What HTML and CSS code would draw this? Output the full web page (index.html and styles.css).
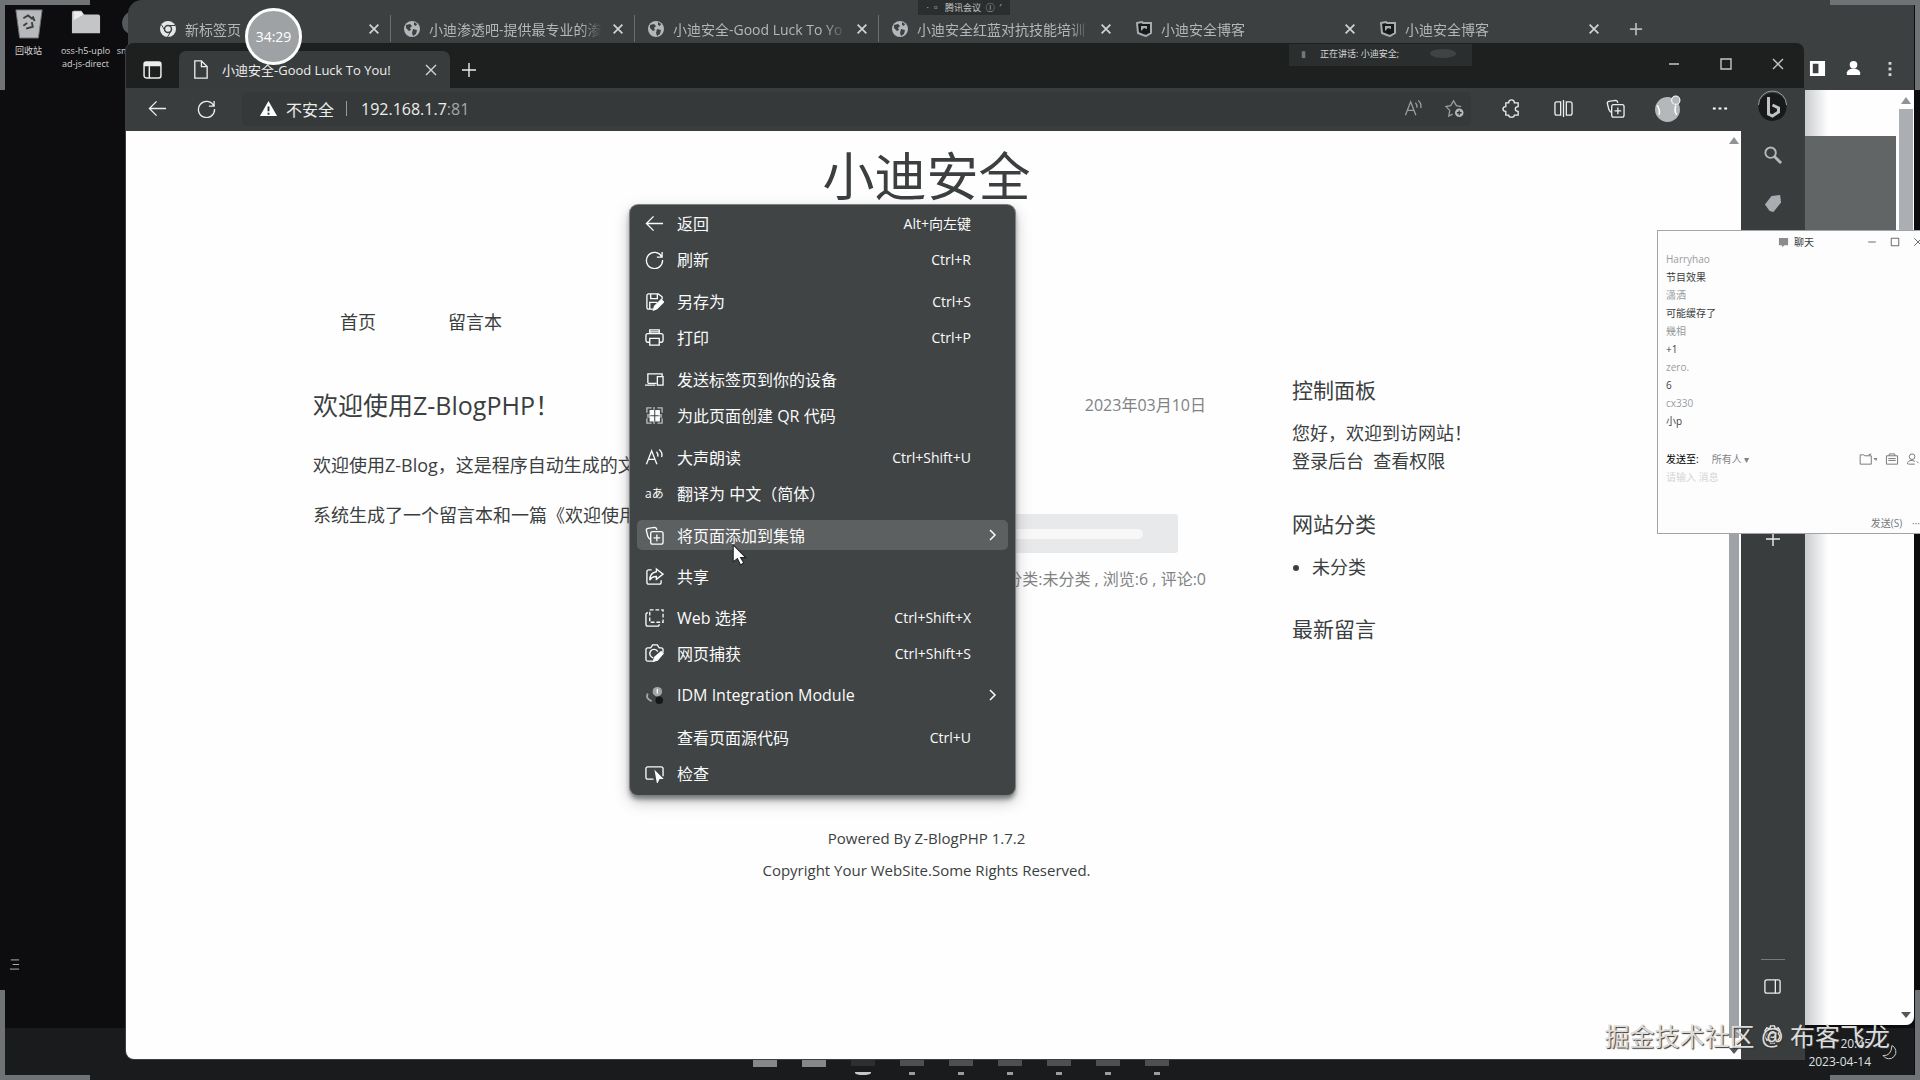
FILE: index.html
```html
<!DOCTYPE html>
<html lang="zh-CN">
<head>
<meta charset="utf-8">
<title>小迪安全-Good Luck To You!</title>
<link rel="stylesheet" href="styles.css">
</head>
<body>
<svg class="defs" aria-hidden="true">
  <symbol id="x" viewBox="0 0 16 16"><path d="M3 3l10 10M13 3L3 13"/></symbol>
  <symbol id="plus" viewBox="0 0 16 16"><path d="M8 1v14M1 8h14"/></symbol>
  <symbol id="min" viewBox="0 0 16 16"><path d="M3 8h10"/></symbol>
  <symbol id="max" viewBox="0 0 16 16"><path d="M3 3h10v10H3z"/></symbol>
  <symbol id="chev" viewBox="0 0 16 16"><path d="M6 3l5 5-5 5"/></symbol>
  <symbol id="back" viewBox="0 0 20 20"><path d="M19 10H2M9 2.500L1.500 10 9 17.500"/></symbol>
  <symbol id="reload" viewBox="0 0 20 20"><path d="M17.500 7A8.500 8.500 0 1 0 18.500 10.500M18 2v5.500h-5.500"/></symbol>
  <symbol id="globe" viewBox="0 0 16 16"><circle cx="8" cy="8" r="8" fill="#b4b7b9" stroke="none"/><path d="M2 4l4-1 2 2-2 2 1 2-2 1-3-3zM9 8l4 1-1 4-3 2-1-3zM10 1l3 2-1 2-2-1z" fill="#3d4142" stroke="none"/></symbol>
  <symbol id="chrome" viewBox="0 0 16 16"><circle cx="8" cy="8" r="8" fill="#e6e7e8" stroke="none"/><circle cx="8" cy="8" r="3.500" fill="none" stroke="#3d4142" stroke-width="1.500"/><path d="M8 4.500h7M5 9.500L1.500 4M11 10l-3.500 6" stroke="#3d4142"/></symbol>
  <symbol id="blog" viewBox="0 0 16 16"><path d="M1 2l5-1 1 1h8v10l-5 3-3-1-5-2z" fill="#17191a" stroke="#a9acae" stroke-width="2"/><path d="M5 5h6v3l-3-1-3 3z" fill="#a9acae" stroke="none"/></symbol>
  <symbol id="collect" viewBox="0 0 20 20"><path d="M5 14l-2-3L1.500 5Q1 3 3 2.500L10 1.500Q12 1.500 12.500 4M8 6h9q2 0 2 2v9q0 2-2 2H8q-2 0-2-2V8q0-2 2-2zM12.500 9v7M9 12.500h7"/></symbol>
  <symbol id="read" viewBox="0 0 20 20"><path d="M1.500 17L7 3l5.500 14M3.500 12h7M12 4q2 2 1.500 5M15 1.500q4 3.500 2.500 8"/></symbol>
  <symbol id="save" viewBox="0 0 20 20"><path d="M9 18H4q-2 0-2-2V4q0-2 2-2h10l4 3v3M6 2v5h7V2M5 18v-7h8"/><path d="M9 19l1-4 7-7 2.500 2.500-7 7z" fill="#fff"/></symbol>
  <symbol id="print" viewBox="0 0 20 20"><path d="M5 6V2h10v4M5 15H3q-2 0-2-2V8q0-2 2-2h14q2 0 2 2v5q0 2-2 2h-2M5 11h10v7H5zM5 4h10"/></symbol>
  <symbol id="devices" viewBox="0 0 20 20"><path d="M3 14V4h15v3M0 16h11M13 7h6v9h-6zM3 14h9"/></symbol>
  <symbol id="qr" viewBox="0 0 20 20"><path d="M7 2H2v5M13 2h5v5M2 13v5h5M18 13v5h-5M2 9.500h4M14 9.500h4M2 11.500h4M14 11.500h4M9.500 1v3M9.500 16v3" stroke="#b9bcbd"/><path d="M5.500 5h3.500v4H5.500zM11.500 5H15v4h-3.500zM5.500 11.500h3.500v4H5.500zM11.500 11.500H15v4h-3.500z" fill="#fff"/></symbol>
  <symbol id="share" viewBox="0 0 20 20"><path d="M7 3H4Q2 3 2 5v11q0 2 2 2h11q2 0 2-2v-2M12 2l7 5.500L12 13v-3q-5 0-7 4 0-8 7-9z"/></symbol>
  <symbol id="select" viewBox="0 0 20 20"><path d="M5 2h14v13H5z" stroke-dasharray="4 2"/><path d="M3 5q-2 0-2 2v10q0 2 2 2h10q2 0 2-2"/></symbol>
  <symbol id="capture" viewBox="0 0 20 20"><path d="M10 18H3q-2 0-2-2V6q0-2 2-2h3l2-3h5l2 3h2q2 0 2 2v3M13.500 8a4.500 4.500 0 1 0-5 6.500"/><path d="M9 18l1-4 7-6 2 2-6 7z" fill="#fff"/></symbol>
  <symbol id="idm" viewBox="0 0 20 20"><circle cx="13" cy="6" r="5" fill="#a2a5a8" stroke="none"/><circle cx="15" cy="15" r="4" fill="#151718" stroke="none"/><path d="M3 8q-3 5 4 8" stroke="#a2a5a8" stroke-width="2"/><path d="M13 3v5"/></symbol>
  <symbol id="inspect" viewBox="0 0 20 20"><path d="M9 16H3q-2 0-2-2V5q0-2 2-2h14q2 0 2 2v8"/><path d="M11 8l7 7h-3l-2 4z" fill="#fff"/></symbol>
  <symbol id="panel" viewBox="0 0 20 20"><rect x="2" y="3" width="16" height="14" rx="2"/><path d="M13 3v14"/></symbol>
</svg>

<div class="desktop">
  <nav class="shortcuts">
    <a class="shortcut" href="#">
      <svg class="pic" viewBox="0 0 32 34"><path d="M2 3h28l-4 30H6z" fill="#b7b9bb" stroke="#6c6f71"/><path d="M10 12l5-3 5 4M10 20l4-3M13 23l7-2-1-5M20 10l2 5" stroke="#3c3f40" stroke-width="2" fill="none"/></svg>
      <span>回收站</span>
    </a>
    <a class="shortcut" href="#">
      <svg class="pic" viewBox="0 0 32 34"><path d="M1 6q0-2 2-2h8l3 4h15q2 0 2 2v18H1z" fill="#c3c5c7"/><path d="M3 5h8l2 3-10 6z" fill="#ececec"/></svg>
      <span>oss-h5-uplo<br>ad-js-direct</span>
    </a>
    <a class="shortcut partial" href="#">
      <svg class="pic" viewBox="0 0 32 34"><circle cx="28" cy="17" r="13" fill="#55595b"/></svg>
      <span>sm</span>
    </a>
  </nav>
  <svg class="handle" viewBox="0 0 12 12"><path d="M2 1h9M4 6h7M1 11h10"/></svg>

  <section class="chrome">
    <header class="chrome-tabs">
      <div class="ctab"><svg><use href="#chrome"/></svg><a href="#">新标签页</a><button aria-label="关闭"><svg><use href="#x"/></svg></button></div>
      <div class="ctab"><svg><use href="#globe"/></svg><a href="#">小迪渗透吧-提供最专业的渗</a><button aria-label="关闭"><svg><use href="#x"/></svg></button></div>
      <div class="ctab"><svg><use href="#globe"/></svg><a href="#">小迪安全-Good Luck To Yo</a><button aria-label="关闭"><svg><use href="#x"/></svg></button></div>
      <div class="ctab plain"><svg><use href="#globe"/></svg><a href="#">小迪安全红蓝对抗技能培训</a><button aria-label="关闭"><svg><use href="#x"/></svg></button></div>
      <div class="ctab plain"><svg><use href="#blog"/></svg><a href="#">小迪安全博客</a><button aria-label="关闭"><svg><use href="#x"/></svg></button></div>
      <div class="ctab plain"><svg><use href="#blog"/></svg><a href="#">小迪安全博客</a><button aria-label="关闭"><svg><use href="#x"/></svg></button></div>
      <button class="cnew" aria-label="新标签页"><svg><use href="#plus"/></svg></button>
    </header>
    <div class="chrome-tools">
      <svg viewBox="0 0 18 18"><path d="M1 1h16v16H1zM4 4v10h6V4z" fill="#fff" fill-rule="evenodd"/></svg>
      <svg viewBox="0 0 18 18"><circle cx="9" cy="5" r="4" fill="#fff"/><path d="M2 16v-3q2-4 7-4t7 4v3z" fill="#fff"/></svg>
      <svg viewBox="0 0 18 18"><path d="M8 2h3v3H8zM8 8h3v3H8zM8 14h3v3H8z" fill="#d5d7d8"/></svg>
    </div>
    <div class="chrome-page">
      <div class="chrome-body"><div class="chrome-banner"></div></div>
      <div class="cscroll"><i class="tri up"></i><i class="cthumb"></i><i class="tri down"></i></div>
    </div>
  </section>

  <section class="edge">
    <header class="edge-title">
      <button class="tab-actions" aria-label="标签操作"><svg class="ic" viewBox="0 0 18 18"><rect x="1" y="2" width="16" height="15" rx="2"/><path d="M1 4h16" stroke-width="4"/><path d="M6 6v11"/></svg></button>
      <div class="etab">
        <svg class="ic" viewBox="0 0 18 20"><path d="M3 1h7l6 6v12H3zM10 1v6h6"/></svg>
        <a href="#">小迪安全-Good Luck To You!</a>
        <button aria-label="关闭"><svg class="ic sm"><use href="#x"/></svg></button>
      </div>
      <button class="enew" aria-label="新建标签页"><svg class="ic sm"><use href="#plus"/></svg></button>
      <div class="wctl">
        <button aria-label="最小化"><svg class="ic sm"><use href="#min"/></svg></button>
        <button aria-label="最大化"><svg class="ic sm"><use href="#max"/></svg></button>
        <button aria-label="关闭"><svg class="ic sm"><use href="#x"/></svg></button>
      </div>
    </header>
    <div class="edge-tools">
      <button class="t1" aria-label="返回"><svg class="ic"><use href="#back"/></svg></button>
      <button class="t2" aria-label="刷新"><svg class="ic"><use href="#reload"/></svg></button>
      <div class="address">
        <svg class="ic" viewBox="0 0 20 20"><path d="M10 2l9 16H1z" fill="#fff"/><path d="M10 8v5M10 14.500v2" stroke="#2c2e2e" stroke-width="2"/></svg>
        <span>不安全</span><i></i><span>192.168.1.7<em>:81</em></span>
        <div class="inbar">
          <button aria-label="朗读"><svg class="ic"><use href="#read"/></svg></button>
          <button aria-label="收藏"><svg class="ic" viewBox="0 0 20 20"><path d="M8 16l-4 2 1-6-4-4 5-1 3-5 3 5 5 1"/><circle cx="15" cy="14.500" r="4.500" fill="#b6b9ba" stroke="none"/><path d="M15 12v5M12.500 14.500h5" stroke="#333"/></svg></button>
        </div>
      </div>
      <div class="acts">
        <button aria-label="扩展"><svg class="ic" viewBox="0 0 20 20"><path d="M4 4h3q0-3 3-3t3 3h4v4q-3 0-3 2.500t3 2.500v4h-4q0 2-3 2t-3-2H4v-4q-3 0-3-2.500T4 8z"/></svg></button>
        <button aria-label="分屏"><svg class="ic" viewBox="0 0 20 20"><path d="M7 3H3Q1 3 1 5v10q0 2 2 2h4zM13 3h4q2 0 2 2v10q0 2-2 2h-4zM10 1v18"/></svg></button>
        <button aria-label="集锦"><svg class="ic"><use href="#collect"/></svg></button>
        <button aria-label="个人资料"><svg class="avatar" viewBox="0 0 26 26"><circle cx="13" cy="14" r="12" fill="#b5b8ba"/><circle cx="21" cy="5" r="4" fill="#b5b8ba" stroke="#fff"/><path d="M3 10q3 4 2 9M21 10q-2 6 1 9" stroke="#fff" stroke-width="1.500" fill="none"/></svg></button>
        <button aria-label="更多"><svg class="ic" viewBox="0 0 20 20"><path d="M3 9h3v2H3zM9 9h3v2H9zM15 9h3v2h-3z" fill="#fff" stroke="none"/></svg></button>
      </div>
    </div>
    <div class="edge-main">
      <div class="page">
        <h1>小迪安全</h1>
        <nav class="menu"><a href="#">首页</a><a href="#">留言本</a></nav>
        <div class="cols">
          <main>
            <div class="posthead"><h2>欢迎使用Z-BlogPHP！</h2><time>2023年03月10日</time></div>
            <p>欢迎使用Z-Blog，这是程序自动生成的文章</p>
            <p>系统生成了一个留言本和一篇《欢迎使用》</p>
            <div class="tags"><i></i></div>
            <div class="meta">分类:未分类 , 浏览:6 , 评论:0</div>
          </main>
          <aside>
            <h3>控制面板</h3>
            <div class="panel">您好，欢迎到访网站！<br><a href="#">登录后台</a>&nbsp; <a href="#">查看权限</a></div>
            <h3>网站分类</h3>
            <ul><li><a href="#">未分类</a></li></ul>
            <h3>最新留言</h3>
          </aside>
        </div>
        <footer>Powered By Z-BlogPHP 1.7.2<br>Copyright Your WebSite.Some Rights Reserved.</footer>
      </div>
      <div class="escroll"><i class="tri up"></i><i class="ethumb"></i><i class="tri down"></i></div>
    </div>
    <div class="rail">
      <button class="bingbtn" aria-label="必应"><svg class="bing" viewBox="0 0 32 36"><circle cx="16" cy="18" r="14" fill="#17191a"/><path d="M2 16a14 14 0 0 1 28 0" stroke="#999c9e" fill="none"/><path d="M12 8v17l4 2 6-4v-4l-6-3" stroke="#c0c2c4" stroke-width="3" fill="none"/></svg></button>
      <button aria-label="搜索"><svg class="ic" viewBox="0 0 20 20"><circle cx="8" cy="7" r="5.500" stroke="#b6b8ba" stroke-width="2"/><path d="M12 11l7 7" stroke="#b6b8ba" stroke-width="3"/></svg></button>
      <button aria-label="购物"><svg class="ic" viewBox="0 0 20 20"><path d="M9 2l9-1 1 8-8 10-4-1-5-7z" fill="#a9acb0" stroke="none"/></svg></button>
      <div class="railgap"></div>
      <button aria-label="添加"><svg class="ic sm"><use href="#plus"/></svg></button>
      <div class="grow"></div>
      <hr>
      <button aria-label="侧栏"><svg class="ic"><use href="#panel"/></svg></button>
      <button aria-label="设置"><svg class="ic" viewBox="0 0 20 20"><circle cx="10" cy="10" r="3"/><path d="M8 1h4l1 3 3-1 2 3-2 3 2 3-2 4-3-1-1 4H8l-1-4-3 1-2-4 2-3-2-3 2-3 3 1z"/></svg></button>
    </div>
  </section>

  <div class="meeting">· ▫ &nbsp;腾讯会议 &nbsp;ⓘ &nbsp;′</div>
  <div class="speaking"><span>▮</span><span>正在讲话: 小迪安全;</span><i></i></div>
  <div class="timer">34:29</div>

  <menu class="ctx">
    <li>
      <button><svg class="ic"><use href="#back"/></svg><span>返回</span><kbd>Alt+向左键</kbd></button>
      <button><svg class="ic"><use href="#reload"/></svg><span>刷新</span><kbd>Ctrl+R</kbd></button>
    </li>
    <li>
      <button><svg class="ic"><use href="#save"/></svg><span>另存为</span><kbd>Ctrl+S</kbd></button>
      <button><svg class="ic"><use href="#print"/></svg><span>打印</span><kbd>Ctrl+P</kbd></button>
    </li>
    <li>
      <button><svg class="ic"><use href="#devices"/></svg><span>发送标签页到你的设备</span></button>
      <button><svg class="ic"><use href="#qr"/></svg><span>为此页面创建 QR 代码</span></button>
    </li>
    <li>
      <button><svg class="ic"><use href="#read"/></svg><span>大声朗读</span><kbd>Ctrl+Shift+U</kbd></button>
      <button><b class="ic aa">aあ</b><span>翻译为 中文（简体）</span></button>
    </li>
    <li>
      <button class="hover"><svg class="ic"><use href="#collect"/></svg><span>将页面添加到集锦</span><svg class="more"><use href="#chev"/></svg></button>
    </li>
    <li>
      <button><svg class="ic"><use href="#share"/></svg><span>共享</span></button>
    </li>
    <li>
      <button><svg class="ic"><use href="#select"/></svg><span>Web 选择</span><kbd>Ctrl+Shift+X</kbd></button>
      <button><svg class="ic"><use href="#capture"/></svg><span>网页捕获</span><kbd>Ctrl+Shift+S</kbd></button>
    </li>
    <li>
      <button><svg class="ic"><use href="#idm"/></svg><span>IDM Integration Module</span><svg class="more"><use href="#chev"/></svg></button>
    </li>
    <li>
      <button><i class="ic"></i><span>查看页面源代码</span><kbd>Ctrl+U</kbd></button>
      <button><svg class="ic"><use href="#inspect"/></svg><span>检查</span></button>
    </li>
  </menu>
  <svg class="cursor" viewBox="0 0 14 20"><path d="M1 0v16l4-3 3 6 3-2-3-5h5z" fill="#fff" stroke="#222"/></svg>

  <section class="chat">
    <header><svg class="ci" viewBox="0 0 12 12"><path d="M1 1h10v8H7l-2 2-1-2H1z" fill="#8a8d8f"/></svg><h4>聊天</h4>
      <div class="chatctl"><button aria-label="最小化"><svg><use href="#min"/></svg></button><button aria-label="最大化"><svg><use href="#max"/></svg></button><button aria-label="关闭"><svg><use href="#x"/></svg></button></div>
    </header>
    <dl><dt>Harryhao</dt><dd>节目效果</dd><dt>潇洒</dt><dd>可能缓存了</dd><dt>幾相</dt><dd>+1</dd><dt>zero.</dt><dd>6</dd><dt>cx330</dt><dd>小p</dd></dl>
    <div class="to"><b>发送至:</b><button class="who">所有人 ▾</button>
      <div class="toicons">
        <svg viewBox="0 0 20 14"><path d="M1 2h4l1 1h7v9H1zM10 2l3-1M16 6h3l-1 2z"/></svg>
        <svg viewBox="0 0 14 14"><path d="M1 3h12v9H1zM4 3V1h6v2M3 6h8M3 8h8"/></svg>
        <svg viewBox="0 0 14 14"><circle cx="6" cy="4" r="3"/><path d="M1 12q0-4 5-4l3 1M2 12h7M11 9l2 2"/></svg>
      </div>
    </div>
    <input class="say" type="text" aria-label="消息" placeholder="请输入 消息">
    <div class="sendrow"><button>发送(S)</button><span>···</span></div>
  </section>

  <footer class="taskbar">
    <div class="apps"><i class="sq"></i><i class="sq"></i><i class="on"></i><i></i><i></i><i></i><i></i><i></i><i></i></div>
  </footer>
  <div class="clock"><span>20:45</span><span>2023-04-14</span></div>
  <svg class="moon" viewBox="0 0 16 16"><path d="M10 1a7 7 0 1 1-9 10q8 1 9-10z"/></svg>
  <div class="watermark">掘金技术社区 @ 布客飞龙</div>
  <i class="corner tl"></i><i class="corner tr"></i><i class="corner bl"></i><i class="corner br"></i>
</div>
</body>
</html>
```
FILE: styles.css
```css
* { box-sizing: border-box; }
body { margin: 0; background: #0d0d0f; font-family: "Open Sans", "Noto Sans CJK SC", sans-serif; }
button, input { font: inherit; color: inherit; background: none; border: 0; padding: 0; margin: 0; }
button { display: flex; align-items: center; justify-content: center; }
a { color: inherit; text-decoration: none; }
h1, h2, h3, h4, p, ul, dl, dd, menu { margin: 0; padding: 0; font-weight: 400; }
i, em { font-style: normal; }
svg { display: block; flex: none; fill: none; stroke: currentColor; }
.defs { position: absolute; width: 0; height: 0; }
.ic { width: 19px; height: 19px; flex: none; stroke-width: 1.400; }
.ic.sm { width: 16px; height: 16px; }

.desktop { position: relative; height: 100vh; overflow: hidden; display: flex; flex-direction: column; justify-content: flex-end; }

/* desktop shortcuts */
.shortcuts { position: absolute; top: 6px; left: 0; display: flex; color: #d4d5d6; font-size: 9px; line-height: 13px; text-align: center; }
.shortcut { width: 57px; display: flex; flex-direction: column; align-items: center; gap: 4px; white-space: nowrap; }
.shortcut.partial { width: 18px; }
.pic { width: 30px; height: 34px; stroke: none; }
.handle { position: absolute; left: 9px; bottom: 109px; width: 11px; height: 13px; color: #bbb; }

/* background browser */
.chrome { position: absolute; inset: 0 6px 55px 128px; display: flex; flex-direction: column; background: #3c4041; border-radius: 14px 0 8px 8px; overflow: hidden; color: #b4b7b9; }
.chrome-tabs { display: flex; align-items: center; height: 43px; padding: 14px 0 0 19px; }
.ctab { width: 244px; height: 28px; padding: 0 9px 0 13px; display: flex; align-items: center; gap: 9px; font-size: 14px; border-right: 1px solid #6a6e70; }
.ctab.plain { border-color: transparent; }
.ctab > svg { width: 16px; height: 16px; }
.ctab a { flex: 1; overflow: hidden; white-space: nowrap; mask-image: linear-gradient(90deg, #000 88%, transparent); }
.ctab button svg { width: 14px; height: 14px; stroke-width: 2; color: #d0d2d3; }
.cnew { margin-left: 18px; }
.cnew svg { width: 14px; height: 14px; stroke-width: 2; }
.chrome-tools { height: 47px; display: flex; justify-content: flex-end; align-items: center; gap: 19px; padding: 3px 16px 0 0; }
.chrome-tools svg { width: 17px; height: 17px; stroke: none; }
.chrome-page { flex: 1; display: flex; background: #fefefe; }
.chrome-body { flex: 1; padding-top: 46px; background: linear-gradient(270deg, #fefefe 70px, #c8cacc 94px); }
.chrome-banner { height: 100px; margin-right: 2px; background: #626566; }
.cscroll { width: 16px; display: flex; flex-direction: column; align-items: center; gap: 5px; padding: 7px 0; }
.cthumb { width: 14px; height: 200px; background: #abaeb2; }
.tri { width: 0; height: 0; border: 5px solid transparent; border-top: 0; border-bottom: 7px solid #8f9396; }
.tri.down { margin-top: auto; border-bottom: 0; border-top: 6px solid #55585a; }

/* foreground browser */
.edge { position: absolute; inset: 43px 116px 21px 126px; display: grid; grid-template: 45px 43px 1fr / 1fr 63px; background: #3a3d3d; border-radius: 8px 8px 0 8px; overflow: hidden; color: #eceded; box-shadow: 0 0 0 1px #3c3f40; }
.edge-title { grid-row: 1; grid-column: 1 / 3; background: #1e1f1f; display: flex; align-items: center; }
.tab-actions { width: 53px; padding-top: 8px; }
.etab { align-self: flex-end; height: 37px; width: 271px; padding: 0 11px 0 12px; display: flex; align-items: center; gap: 12px; background: #393c3c; border-radius: 7px 7px 0 0; font-size: 13px; }
.etab a { flex: 1; white-space: nowrap; }
.etab a + button { color: #d5d6d6; }
.enew { width: 38px; padding-top: 8px; }
.wctl { margin: 0 18px 3px auto; display: flex; gap: 36px; color: #c5c7c7; }
.edge-tools { grid-row: 2; grid-column: 1; display: flex; align-items: center; padding: 0 0 2px 22px; }
.t1 { margin-right: 30px; }
.address { flex: 1; height: 34px; margin: 0 22px 0 26px; padding-left: 17px; display: flex; align-items: center; gap: 8px; background: #363939; border-radius: 5px; font-size: 16px; }
.address > .ic { stroke: none; }
.address i { width: 1px; height: 15px; margin: 0 6px 0 4px; background: #999; }
.address em { color: #a5a8a8; }
.address span { white-space: nowrap; }
.inbar { margin-left: auto; padding-right: 7px; display: flex; gap: 22px; color: #999c9d; }
.acts { display: flex; align-items: center; gap: 16px; padding-right: 4px; }
.acts button { min-width: 36px; }
.avatar { width: 27px; height: 27px; stroke: none; }
.edge-main { grid-row: 3; grid-column: 1; display: flex; background: #fefefe; color: #3b3f40; }
.page { flex: 1; font-size: 18px; }
.page h1 { margin-top: 7px; font-size: 52px; line-height: 76px; text-align: center; }
.menu { display: flex; gap: 72px; margin: 94px 0 0 214px; line-height: 28px; }
.cols { display: grid; grid-template-columns: 893px 1fr; gap: 86px; margin: 45px 12% 0 187px; line-height: 28px; }
.posthead { display: flex; justify-content: space-between; align-items: center; height: 48px; }
.posthead h2 { font-size: 25px; }
time, .meta { font-size: 16px; color: #7f8385; }
.cols p { margin-top: 22px; }
.tags { height: 39px; margin: -15px 28px 0 400px; display: grid; place-items: center; background: #e8e9ea; border-radius: 3px; }
.tags i { width: 45%; height: 10px; margin-left: 40%; background: #f8f8f9; border-radius: 5px; }
.meta { margin-top: 12px; text-align: right; }
aside h3 { font-size: 21px; line-height: 30px; margin: 0; font-weight: 400; }
aside h3:first-child { margin-top: -6px; }
.panel { margin-top: 14px; }
.panel + h3 { margin-top: 34px; }
aside ul { margin: 14px 0 33px; padding-left: 20px; }
footer { text-align: center; }
.page footer { margin-top: 178px; font-size: 15px; line-height: 32px; }
.escroll { width: 14px; padding: 6px 0 5px; display: flex; flex-direction: column; align-items: center; }
.ethumb { flex: 1; width: 10px; margin: 190px 0 10px; background: #9fa3a7; }
.rail { grid-row: 2 / 4; grid-column: 2; display: flex; flex-direction: column; align-items: center; gap: 29px; padding: 1px 0 15px; }
.bingbtn { margin-bottom: -8px; }
.bing { width: 33px; height: 36px; stroke: none; }
.railgap { height: 260px; }
.grow { flex: 1; }
.rail hr { width: 24px; height: 1px; border: 0; margin: 0 0 -12px; background: #777a7b; }

/* screen-share overlays */
.meeting { position: absolute; top: 0; left: 918px; width: 92px; height: 15px; background: #2b2e2f; color: #c2c4c5; font-size: 9px; line-height: 15px; text-align: center; white-space: nowrap; }
.speaking { position: absolute; top: 44px; left: 1289px; width: 183px; height: 22px; padding: 0 16px 3px 12px; display: flex; align-items: center; gap: 14px; background: #2b2e2e; color: #d6d7d8; font-size: 9px; white-space: nowrap; }
.speaking span:first-child { color: #777; }
.speaking i { width: 26px; height: 9px; margin-left: auto; background: #3f4344; border-radius: 50%; }
.timer { position: absolute; top: 8px; left: 245px; width: 57px; height: 57px; border: 3px solid #fdfdfd; border-radius: 50%; background: #9fa2a5; color: #fff; font-size: 14px; line-height: 51px; text-align: center; }

/* context menu */
.ctx { position: absolute; top: 205px; left: 630px; width: 385px; padding: 0 7px 4px; display: flex; flex-direction: column; gap: 6px; list-style: none; background: #404445; color: #fbfbfb; font-size: 16px; border-radius: 8px; box-shadow: 0 0 0 1px #7d8082, 0 4px 5px #77797b, 0 6px 16px #0004; }
.ctx button { width: 100%; height: 36px; padding: 0 37px 0 8px; justify-content: flex-start; gap: 13px; white-space: nowrap; }
.ctx li:nth-child(5), .ctx li:nth-child(6) { margin-bottom: -1px; }
.ctx .hover { height: 30px; margin: 3px 0; background: #5c6060; border-radius: 5px; }
.ctx kbd { margin-left: auto; font: inherit; font-size: 14px; }
.aa { display: flex; align-items: center; font-size: 12px; font-weight: 400; }
.more { width: 16px; height: 16px; margin: 0 -29px 0 auto; stroke-width: 1.500; }
.cursor { position: absolute; left: 732px; top: 545px; width: 15px; height: 21px; }

/* chat window */
.chat { position: absolute; top: 231px; right: -10px; width: 272px; height: 302px; padding: 0 10px 0 8px; background: #fdfdfd; color: #3a3d3e; font-size: 10px; line-height: 18px; box-shadow: 0 0 0 1px #a2a5a8; display: flex; flex-direction: column; }
.chat header { display: flex; align-items: center; height: 16px; margin-top: 3px; padding-left: 112px; gap: 5px; }
.chat h4 { font-size: 10px; }
.ci { width: 11px; height: 11px; stroke: none; }
.chatctl { margin: 0 -4px 0 auto; display: flex; gap: 11px; }
.chatctl svg { width: 12px; height: 12px; }
.chat dt { color: #999c9f; }
.to { display: flex; align-items: center; gap: 13px; margin-top: 20px; }
.to b { font-weight: 400; color: #000; }
.who { color: #7f8284; }
.toicons { margin-left: auto; display: flex; gap: 7px; color: #6f7274; }
.toicons svg { height: 13px; width: 14px; }
.toicons svg:first-child { width: 19px; }
.say { height: 18px; color: #333; }
.say::placeholder { color: #d3d5d6; opacity: 1; }
.sendrow { margin-top: auto; padding-bottom: 1px; display: flex; justify-content: flex-end; gap: 10px; color: #77797b; }

/* taskbar */
.taskbar { height: 52px; margin-right: 6px; padding: 31px 0 0 7px; background: #191b1c; }
.apps { display: flex; justify-content: center; gap: 25px; }
.apps i { width: 24px; height: 16px; border-radius: 0 0 9px 9px; background: linear-gradient(#4d5052 7px, transparent 7px) top, linear-gradient(#9a9da0, #9a9da0) center bottom / 6px 3px no-repeat; }
.apps .sq { background: linear-gradient(#85888a 8px, transparent 8px); border-radius: 0; }
.apps .on { background: linear-gradient(#2c2f30 7px, transparent 7px) top, linear-gradient(#c6c9cb, #c6c9cb) center bottom / 16px 3px no-repeat; }
.clock { position: absolute; right: 49px; bottom: 9px; display: flex; flex-direction: column; align-items: flex-end; color: #dfe0e1; font-size: 12px; line-height: 18px; }
.moon { position: absolute; right: 22px; bottom: 19px; width: 16px; height: 17px; color: #ccc; }
.watermark { position: absolute; right: 30px; bottom: 26px; color: #dcdcdc; font-size: 25px; line-height: 36px; text-shadow: 1px 1px 1px #333; white-space: nowrap; }
.corner { position: absolute; width: 90px; height: 90px; border: 0 solid #707375; }
.tl { top: 0; left: 0; border-width: 5px 0 0 5px; }
.tr { top: 0; right: 0; border-width: 5px 5px 0 0; }
.bl { bottom: 0; left: 0; border-width: 0 0 5px 5px; }
.br { bottom: 0; right: 0; border-width: 0 5px 5px 0; }
```
